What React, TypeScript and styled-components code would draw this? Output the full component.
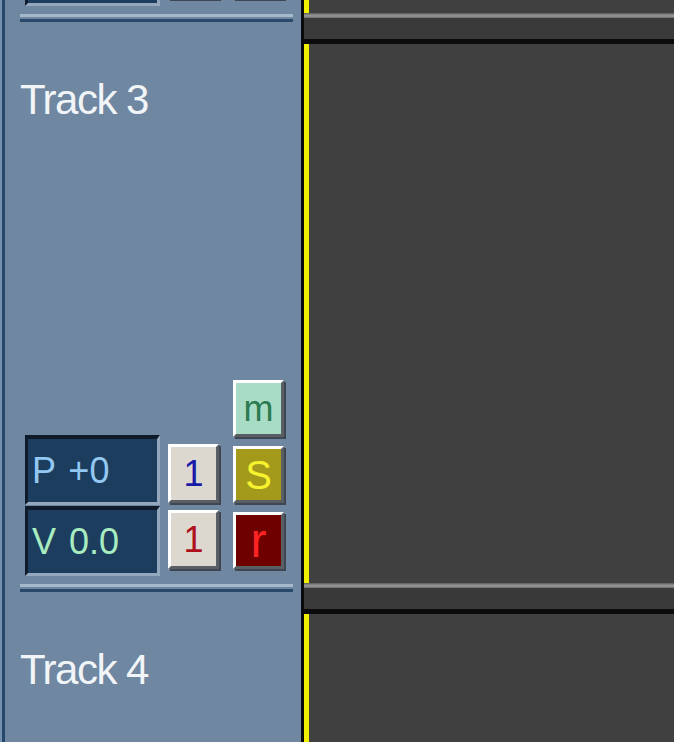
import styled, { createGlobalStyle } from 'styled-components';

const GlobalStyle = createGlobalStyle`
  html, body {
    margin: 0;
    padding: 0;
    background: #404040;
  }
  body {
    font-family: 'Liberation Sans', Arial, sans-serif;
  }
`;

type Track = {
  name: string;
  pitch: string;
  volume: string;
  // which parts are scrolled into view
  showLabel: boolean;
  showControls: boolean;
};

const tracks: Track[] = [
  { name: 'Track 2', pitch: 'P +0', volume: 'V 0.0', showLabel: false, showControls: false },
  { name: 'Track 3', pitch: 'P +0', volume: 'V 0.0', showLabel: true, showControls: true },
  { name: 'Track 4', pitch: 'P +0', volume: 'V 0.0', showLabel: true, showControls: false },
];

function TrackRow({ track }: { track: Track }) {
  const show = track.showControls;
  return (
    <Row>
      <Header>
        <HeaderRule />
        <Label>{track.showLabel && track.name}</Label>
        <Controls>
          <ValueColumn>
            <ValueBox $color='#92c8f2'>{show && track.pitch}</ValueBox>
            <ValueBox $color='#a8ecc0'>{show && track.volume}</ValueBox>
          </ValueColumn>
          <ButtonColumn $gap={7}>
            <BevelButton type='button' $face='#dcd8d0' $ink='#1a1aa8' $height={59}>
              {show && '1'}
            </BevelButton>
            <BevelButton type='button' $face='#dcd8d0' $ink='#b0101c' $height={59}>
              {show && '1'}
            </BevelButton>
          </ButtonColumn>
          <ButtonColumn $gap={9} $shift={14}>
            <BevelButton type='button' $face='#a8dcc4' $ink='#2a7a50' $height={57}>
              {show && 'm'}
            </BevelButton>
            <BevelButton
              type='button'
              $face='#a39a1c'
              $ink='#f6f22e'
              $height={57}
              $size={40}
            >
              {show && 'S'}
            </BevelButton>
            <BevelButton
              type='button'
              $face='#6e0000'
              $ink='#ff2424'
              $height={57}
              $size={48}
            >
              {show && 'r'}
            </BevelButton>
          </ButtonColumn>
        </Controls>
      </Header>
      <Lane>
        <LaneBand />
        <LaneBody />
      </Lane>
    </Row>
  );
}

export default function App() {
  return (
    <>
      <GlobalStyle />
      <Page>
        <TrackList>
          {tracks.map((t) => (
            <TrackRow key={t.name} track={t} />
          ))}
        </TrackList>
      </Page>
    </>
  );
}

const Page = styled.div`
  height: 742px;
  overflow: hidden;
  background: #404040;
`;

const TrackList = styled.div`
  display: flex;
  flex-direction: column;
  margin-top: -557px;
`;

const Row = styled.div`
  display: grid;
  grid-template-columns: 301px 1fr;
  height: 570px;
`;

const Header = styled.div`
  display: flex;
  flex-direction: column;
  padding-top: 1px;
  background: #6f87a1;
  box-shadow: inset 2px 0 0 #7590aa, inset 5px 0 0 #27476a;
`;

const HeaderRule = styled.div`
  margin: 0 8px 0 20px;
  height: 2px;
  border-top: 3px solid #a6b9cb;
  border-bottom: 3px solid #29496b;
`;

const Label = styled.div`
  height: 42px;
  margin: 57px 0 0 20px;
  color: #f2f5f8;
  font-size: 42px;
  line-height: 42px;
  letter-spacing: -1.5px;
`;

const Controls = styled.div`
  display: flex;
  align-items: flex-end;
  margin-top: auto;
  padding: 0 0 7px 25px;
`;

const ValueColumn = styled.div`
  display: flex;
  flex-direction: column;
  gap: 1px;
`;

const ValueBox = styled.div<{ $color: string }>`
  display: flex;
  align-items: center;
  box-sizing: border-box;
  width: 135px;
  height: 70px;
  padding-left: 4px;
  background: #1c3d5e;
  border-style: solid;
  border-width: 4px 3px 3px 3px;
  border-color: #0f1b2a #93a8bd #93a8bd #0f1b2a;
  color: ${(p) => p.$color};
  font-size: 36px;
  word-spacing: 3px;
  white-space: pre;
`;

const ButtonColumn = styled.div<{ $gap: number; $shift?: number }>`
  display: flex;
  flex-direction: column;
  gap: ${(p) => p.$gap}px;
  margin: 0 0 7px ${(p) => p.$shift ?? 8}px;
`;

const BevelButton = styled.button<{
  $face: string;
  $ink: string;
  $height: number;
  $size?: number;
}>`
  display: flex;
  align-items: center;
  justify-content: center;
  box-sizing: border-box;
  width: 51px;
  height: ${(p) => p.$height}px;
  padding: 0;
  background: ${(p) => p.$face};
  border-style: solid;
  border-width: 3px;
  border-color: #ffffff #5a5f66 #5a5f66 #ffffff;
  box-shadow: 2px 2px 0 #3e4652;
  color: ${(p) => p.$ink};
  font-family: 'Liberation Sans', Arial, sans-serif;
  font-size: ${(p) => p.$size ?? 36}px;
  line-height: 1;
  cursor: pointer;
`;

const Lane = styled.div`
  display: flex;
  flex-direction: column;
  border-left: 3px solid #0a0a0a;
`;

const LaneBand = styled.div`
  height: 26px;
  background: linear-gradient(
    to bottom,
    #5a5a5a 0,
    #8c8c8c 2px,
    #9a9a9a 3px,
    #6a6a6a 5px,
    #393939 5px,
    #3a3a3a 100%
  );
  border-bottom: 5px solid #0b0b0b;
`;

const LaneBody = styled.div`
  flex: 1;
  background: #404040;
  border-left: 5px solid #f0f000;
`;
